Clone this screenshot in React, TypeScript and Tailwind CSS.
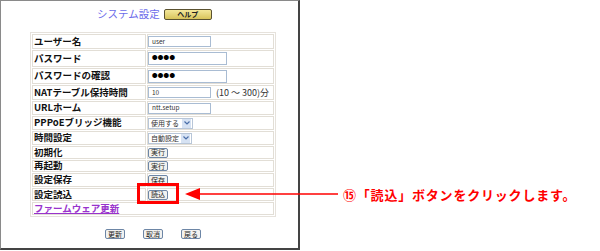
import React from "react";

const jp = { fontFamily: '"Noto Sans CJK JP", "Noto Sans", sans-serif' };

function TextBox({ value, w, h = "h-[11px]", dots = false }: { value: string; w: string; h?: string; dots?: boolean }) {
  return (
    <div className={`${w} ${h} border border-[#a9bcd3] bg-white flex items-center pl-[3px] ${dots ? "text-[5.5px] text-black tracking-[0.3px]" : "text-[6.5px] text-[#333]"}`}>
      {value}
    </div>
  );
}

function SelectBox({ value, w }: { value: string; w: string }) {
  return (
    <div className={`${w} h-[11px] border border-[#b8c6d8] bg-white flex items-center justify-between`}>
      <span className="text-[7px] text-[#333] pl-[2px] leading-none">{value}</span>
      <span className="w-[9px] h-[9px] bg-[#d6e2f3] flex items-center justify-center mr-[1px]">
        <svg width="6" height="4" viewBox="0 0 6 4"><path d="M0.5 0.5 L3 3 L5.5 0.5" stroke="#4a6ea8" strokeWidth="1.2" fill="none" /></svg>
      </span>
    </div>
  );
}

function Btn({ label }: { label: string }) {
  return (
    <div className="w-[20px] h-[10px] border border-[#6d86a6] rounded-[2px] bg-[#f2f2f0] flex items-center justify-center text-[7px] leading-none text-[#222]">
      {label}
    </div>
  );
}

type Row = { label: string; h: string; content?: React.ReactNode; link?: boolean };

const rows: Row[] = [
  { label: "ユーザー名", h: "h-[15px]", content: <TextBox value="user" w="w-[63px]" /> },
  { label: "パスワード", h: "h-[17px]", content: <TextBox value="●●●●" w="w-[79px]" h="h-[13px]" dots /> },
  { label: "パスワードの確認", h: "h-[16px]", content: <TextBox value="●●●●" w="w-[79px]" h="h-[13px]" dots /> },
  {
    label: "NATテーブル保持時間",
    h: "h-[15px]",
    content: (
      <div className="flex items-center gap-[5px]">
        <TextBox value="10" w="w-[63px]" />
        <span className="text-[9px] text-[#333] leading-none">(10 〜 300)分</span>
      </div>
    ),
  },
  { label: "URLホーム", h: "h-[14px]", content: <TextBox value="ntt.setup" w="w-[63px]" /> },
  { label: "PPPoEブリッジ機能", h: "h-[14px]", content: <SelectBox value="使用する" w="w-[45px]" /> },
  { label: "時間設定", h: "h-[14px]", content: <SelectBox value="自動設定" w="w-[44px]" /> },
  { label: "初期化", h: "h-[13px]", content: <Btn label="実行" /> },
  { label: "再起動", h: "h-[12px]", content: <Btn label="実行" /> },
  { label: "設定保存", h: "h-[14px]", content: <Btn label="保存" /> },
  { label: "設定読込", h: "h-[13px]", content: <Btn label="読込" /> },
  { label: "ファームウェア更新", h: "h-[13px]", link: true },
];

export default function App() {
  return (
    <div className="relative w-[600px] h-[251px] bg-white overflow-hidden" style={jp}>
      <div className="w-[300px] h-[250px] border-l border-t border-[#8a8a8a] border-r-2 border-b-2 border-r-[#444] border-b-[#444] flex flex-col">
        {/* title */}
        <div className="flex items-center gap-[4px] pl-[96px] mt-[7px] h-[13px]">
          <span className="text-[10.5px] text-[#6b6bea] leading-none">システム設定</span>
          <div className="w-[48px] h-[11px] border border-[#5a5230] rounded-[2px] bg-gradient-to-b from-[#f4e89a] to-[#d8c45a] flex items-center justify-center text-[7px] font-bold text-[#222] leading-none">
            ヘルプ
          </div>
        </div>

        {/* table */}
        <div className="ml-[29px] mt-[11px] w-[246px] border border-[#e6e2dc] p-[1px] flex flex-col gap-[1px]">
          {rows.map((r, i) =>
            r.link ? (
              <div key={i} className={`${r.h} border border-[#e2ded6] flex items-center pl-[1px]`}>
                <span className="text-[9.5px] font-bold text-[#9933cc] underline leading-none">{r.label}</span>
              </div>
            ) : (
              <div key={i} className={`${r.h} flex gap-[1px]`}>
                <div className="w-[114px] border border-[#e2ded6] flex items-center pl-[1px]">
                  <span className="text-[9.5px] font-bold text-[#111] leading-none whitespace-nowrap">{r.label}</span>
                </div>
                <div className="flex-1 border border-[#e2ded6] flex items-center">{r.content}</div>
              </div>
            )
          )}
        </div>

        {/* bottom buttons */}
        <div className="flex gap-[18px] pl-[104px] mt-[12px]">
          <Btn label="更新" />
          <Btn label="取消" />
          <Btn label="戻る" />
        </div>
      </div>

      {/* annotation overlays */}
      <div className="absolute left-[137px] top-[183px] w-[42px] h-[21px] border-[3px] border-[#ff0000]" />
      <svg className="absolute left-[184px] top-[186px]" width="156" height="16" viewBox="0 0 156 16">
        <polygon points="1,8 16,2 16,14" fill="#ff0000" />
        <line x1="14" y1="8" x2="154" y2="8" stroke="#ff0000" strokeWidth="1.5" />
      </svg>
      <div className="absolute left-[343px] top-[188px] text-[13px] font-bold text-[#ff0000] leading-none whitespace-nowrap tracking-[0.8px]">
        ⑮「読込」ボタンをクリックします。
      </div>
    </div>
  );
}
